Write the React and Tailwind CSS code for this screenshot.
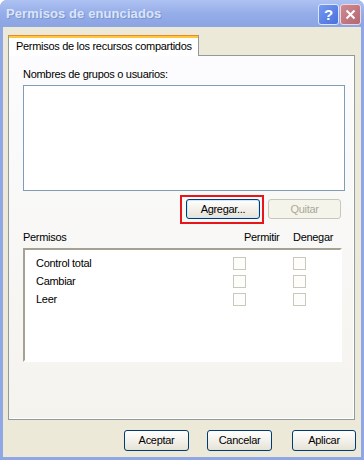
import React from "react";

const XpButton = ({ children, className = "", disabled = false }) => (
  <div
    className={`flex items-center justify-center rounded-[3px] border text-[11px] ${
      disabled
        ? "border-[#c9c7ba] bg-[#f5f4ea] text-[#aca899]"
        : "border-[#003c74] bg-gradient-to-b from-[#ffffff] to-[#e6e3d6] text-black"
    } ${className}`}
  >
    {children}
  </div>
);

const Checkbox = () => (
  <div className="w-[13px] h-[13px] border border-[#cac8bb] bg-[#fdfdfb]" />
);

const App = () => {
  const rows = ["Control total", "Cambiar", "Leer"];

  return (
    <div className="w-[364px] h-[460px] flex flex-col bg-[#8fa8e5] rounded-t-[7px] overflow-hidden font-['Liberation_Sans',Arial,sans-serif] tracking-[-0.3px]">
      {/* Title bar */}
      <div className="h-[27px] flex items-center pl-[6px] pr-[3px] bg-gradient-to-b from-[#aec2f2] via-[#95ade8] to-[#8ba5e3]">
        <span className="text-[13px] font-bold text-[#dbe5f9] tracking-[0.1px] [text-shadow:1px_1px_0_#7d94d0]">
          Permisos de enunciados
        </span>
        <div className="ml-auto flex gap-[1px] mt-[1px]">
          <div className="w-[21px] h-[21px] rounded-[3px] border border-[#dde6fb] bg-gradient-to-br from-[#7799f0] to-[#4a70dc] flex items-center justify-center text-white font-bold text-[15px] leading-none">
            ?
          </div>
          <div className="w-[21px] h-[21px] rounded-[3px] border border-[#eed6dc] bg-gradient-to-br from-[#cf8a94] to-[#b4676f] flex items-center justify-center">
            <svg width="11" height="11" viewBox="0 0 11 11">
              <path d="M1.5 1.5 L9.5 9.5 M9.5 1.5 L1.5 9.5" stroke="#fff" strokeWidth="2" />
            </svg>
          </div>
        </div>
      </div>

      {/* Client area */}
      <div className="flex-1 mx-[3px] mb-[3px] bg-[#ece9d8] flex flex-col">
        <div className="pl-[5px] pt-[8px]">
          {/* Tab */}
          <div className="relative z-10 w-[191px] h-[21px] bg-white border-x border-[#919b9c] -mb-[1px]">
            <div className="h-[1px] bg-[#e68b2c]" />
            <div className="h-[2px] bg-[#ffc83c]" />
            <div className="pl-[7px] pt-[2px] text-[11px] leading-[13px] text-black whitespace-nowrap">
              Permisos de los recursos compartidos
            </div>
          </div>

          {/* Panel */}
          <div className="w-[347px] h-[365px] border border-[#919b9c] bg-gradient-to-b from-[#fcfcfe] to-[#f4f3ee] pl-[14px] shadow-[inset_-1px_-1px_0_#ffffff]">
            <div className="mt-[12px] h-[13px] text-[11px] leading-[13px] text-black">
              Nombres de grupos o usuarios:
            </div>
            <div className="mt-[4px] w-[322px] h-[106px] border border-[#7f9db9] bg-white" />

            <div className="mt-[8px] w-[322px] flex justify-end pr-[4px] gap-[8px]">
              <div className="relative">
                <XpButton className="w-[74px] h-[20px] shadow-[inset_0_0_0_1px_#cee7ff]">Agregar...</XpButton>
                <div className="absolute -left-[6px] -top-[4px] w-[84px] h-[29px] border-2 border-[#e8161b]" />
              </div>
              <XpButton disabled className="w-[73px] h-[20px]">Quitar</XpButton>
            </div>

            <div className="mt-[12px] h-[13px] w-[322px] relative text-[11px] leading-[13px] text-black">
              <span>Permisos</span>
              <span className="absolute left-[221px] top-0">Permitir</span>
              <span className="absolute left-[270px] top-0">Denegar</span>
            </div>

            <div className="mt-[4px] w-[319px] h-[114px] border-2 border-t-[#a5a294] border-l-[#a5a294] border-b-white border-r-white bg-white pt-[4px]">
              {rows.map((r) => (
                <div key={r} className="h-[18px] flex items-center text-[11px] text-black">
                  <span className="w-[208px] pl-[11px]">{r}</span>
                  <Checkbox />
                  <span className="w-[47px]" />
                  <Checkbox />
                </div>
              ))}
            </div>
          </div>
        </div>

        {/* Bottom buttons */}
        <div className="mt-[10px] flex pl-[121px]">
          <XpButton className="w-[65px] h-[21px]">Aceptar</XpButton>
          <XpButton className="w-[65px] h-[21px] ml-[18px]">Cancelar</XpButton>
          <XpButton className="w-[64px] h-[21px] ml-[20px]">Aplicar</XpButton>
        </div>
      </div>
    </div>
  );
};

export default App;
